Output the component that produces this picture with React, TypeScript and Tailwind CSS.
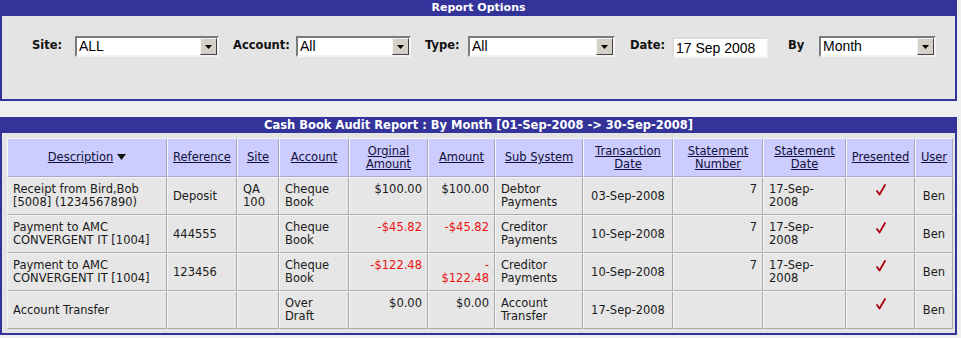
import React from "react";

const tdFont = { fontFamily: '"DejaVu Sans", Verdana, sans-serif' };

function Select({ value, width }: { value: string; width: string }) {
  return (
    <div
      className={`flex h-[21px] ${width} items-stretch border-2 border-t-[#7a7a7a] border-l-[#7a7a7a] border-b-[#f4f4f4] border-r-[#f4f4f4] bg-white`}
    >
      <div
        className="flex-1 pl-[2px] text-[14px] font-normal leading-[17px] text-black"
        style={{ fontFamily: '"Liberation Sans", Arial, sans-serif' }}
      >
        {value}
      </div>
      <div className="flex w-[17px] items-center justify-center border border-t-[#f4f4f4] border-l-[#f4f4f4] border-b-[#404040] border-r-[#404040] bg-[#d4d0c8]">
        <svg width="7" height="4" viewBox="0 0 7 4">
          <path d="M0 0 H7 L3.5 4 Z" fill="#000" />
        </svg>
      </div>
    </div>
  );
}

function Check() {
  return (
    <svg width="12" height="14" viewBox="0 0 12 14" className="mx-auto">
      <path d="M2 8 L4.5 11.5 L10 2" fill="none" stroke="#b00010" strokeWidth="1.8" strokeLinecap="round" strokeLinejoin="round" />
    </svg>
  );
}

type Row = {
  desc: string[];
  ref: string;
  site: string[];
  account: string[];
  orig: string;
  amount: string[];
  red: boolean;
  sub: string[];
  tdate: string;
  snum: string;
  sdate: string[];
};

const rows: Row[] = [
  {
    desc: ["Receipt from Bird,Bob", "[5008] (1234567890)"],
    ref: "Deposit",
    site: ["QA", "100"],
    account: ["Cheque", "Book"],
    orig: "$100.00",
    amount: ["$100.00", "\u00a0"],
    red: false,
    sub: ["Debtor", "Payments"],
    tdate: "03-Sep-2008",
    snum: "7",
    sdate: ["17-Sep-", "2008"],
  },
  {
    desc: ["Payment to AMC", "CONVERGENT IT [1004]"],
    ref: "444555",
    site: [],
    account: ["Cheque", "Book"],
    orig: "-$45.82",
    amount: ["-$45.82", "\u00a0"],
    red: true,
    sub: ["Creditor", "Payments"],
    tdate: "10-Sep-2008",
    snum: "7",
    sdate: ["17-Sep-", "2008"],
  },
  {
    desc: ["Payment to AMC", "CONVERGENT IT [1004]"],
    ref: "123456",
    site: [],
    account: ["Cheque", "Book"],
    orig: "-$122.48",
    amount: ["-", "$122.48"],
    red: true,
    sub: ["Creditor", "Payments"],
    tdate: "10-Sep-2008",
    snum: "7",
    sdate: ["17-Sep-", "2008"],
  },
  {
    desc: ["Account Transfer"],
    ref: "",
    site: [],
    account: ["Over", "Draft"],
    orig: "$0.00",
    amount: ["$0.00", "\u00a0"],
    red: false,
    sub: ["Account", "Transfer"],
    tdate: "17-Sep-2008",
    snum: "",
    sdate: [],
  },
];

function Lines({ lines }: { lines: string[] }) {
  return (
    <>
      {lines.map((l, i) => (
        <div key={i} className="whitespace-nowrap">{l}</div>
      ))}
    </>
  );
}

const th =
  "border-l border-t border-l-[#f6f6ff] border-t-[#f6f6ff] border-r border-b border-r-[#a8a8c0] border-b-[#a8a8c0] bg-[#ccccff] px-[3px] text-center align-middle font-normal text-[#10103a]";
const td =
  "border-l border-t border-l-[#f4f4f4] border-t-[#f4f4f4] border-r border-b border-r-[#a9a9a9] border-b-[#a9a9a9] bg-[#e6e6e6] px-[5px] align-middle text-[#1a1a1a]";

export default function App() {
  return (
    <div className="min-h-[338px] w-[961px] bg-[#efefef]" style={tdFont}>
      {/* Report Options */}
      <div className="w-[957px]">
        <div className="h-[16px] bg-[#333399] text-center text-[11px] font-bold leading-[16px] text-white">
          Report Options
        </div>
        <div className="flex h-[85px] items-start border-b-2 border-l-2 border-r-2 border-[#333399] bg-[#e4e4e4] pl-[30px] pt-[20px] text-[11.5px] font-bold text-[#111]">
          <span className="mt-[1px] w-[43px]">Site:</span>
          <Select value="ALL" width="w-[144px]" />
          <span className="ml-[14px] mt-[1px] w-[63px]">Account:</span>
          <Select value="All" width="w-[115px]" />
          <span className="ml-[14px] mt-[1px] w-[43px]">Type:</span>
          <Select value="All" width="w-[147px]" />
          <span className="ml-[15px] mt-[1px] w-[42px]">Date:</span>
          <div
            className="mt-[1px] h-[21px] w-[96px] border-2 border-t-[#dcdcdc] border-l-[#dcdcdc] border-b-[#f4f4f4] border-r-[#f4f4f4] bg-white pl-[2px] text-[14px] font-normal leading-[18px] text-black"
            style={{ fontFamily: '"Liberation Sans", Arial, sans-serif' }}
          >
            17 Sep 2008
          </div>
          <span className="ml-[20px] mt-[1px] w-[31px]">By</span>
          <Select value="Month" width="w-[117px]" />
        </div>
      </div>

      <div className="h-[16px]" />

      {/* Cash Book Audit */}
      <div className="w-[957px]">
        <div className="h-[16px] bg-[#333399] text-center text-[11.5px] font-bold leading-[16px] text-white">
          Cash Book Audit Report : By Month [01-Sep-2008 -&gt; 30-Sep-2008]
        </div>
        <div className="border-b-2 border-l-2 border-r-2 border-[#333399] bg-[#e4e4e4] pb-[4px] pl-[5px] pt-[5px]">
          <table className="w-[946px] table-fixed border-separate border-spacing-0 text-[11.5px] leading-[13px]">
            <colgroup>
              <col className="w-[160px]" />
              <col className="w-[70px]" />
              <col className="w-[42px]" />
              <col className="w-[70px]" />
              <col className="w-[79px]" />
              <col className="w-[67px]" />
              <col className="w-[88px]" />
              <col className="w-[90px]" />
              <col className="w-[90px]" />
              <col className="w-[83px]" />
              <col className="w-[69px]" />
              <col className="w-[38px]" />
            </colgroup>
            <thead>
              <tr className="h-[39px]">
                <th className={th}>
                  <span className="underline">Description</span>
                  <svg width="9" height="6" viewBox="0 0 9 6" className="ml-[4px] inline-block align-[1px]">
                    <path d="M0 0 H9 L4.5 6 Z" fill="#111" />
                  </svg>
                </th>
                <th className={th}><span className="underline">Reference</span></th>
                <th className={th}><span className="underline">Site</span></th>
                <th className={th}><span className="underline">Account</span></th>
                <th className={th}><span className="underline">Orginal<br />Amount</span></th>
                <th className={th}><span className="underline">Amount</span></th>
                <th className={th}><span className="underline">Sub System</span></th>
                <th className={th}><span className="underline">Transaction<br />Date</span></th>
                <th className={th}><span className="underline">Statement<br />Number</span></th>
                <th className={th}><span className="underline">Statement<br />Date</span></th>
                <th className={th}><span className="underline">Presented</span></th>
                <th className={th}><span className="underline">User</span></th>
              </tr>
            </thead>
            <tbody>
              {rows.map((r, i) => (
                <tr key={i} className="h-[38px]">
                  <td className={td}><Lines lines={r.desc} /></td>
                  <td className={td}>{r.ref}</td>
                  <td className={td}><Lines lines={r.site} /></td>
                  <td className={td}><Lines lines={r.account} /></td>
                  <td className={`${td} text-right ${r.red ? "text-[#ee1111]" : ""}`}>
                    <Lines lines={[r.orig, "\u00a0"]} />
                  </td>
                  <td className={`${td} text-right ${r.red ? "text-[#ee1111]" : ""}`}>
                    <Lines lines={r.amount} />
                  </td>
                  <td className={td}><Lines lines={r.sub} /></td>
                  <td className={`${td} whitespace-nowrap text-center`}>{r.tdate}</td>
                  <td className={`${td} text-right`}>
                    <Lines lines={[r.snum || "\u00a0", "\u00a0"]} />
                  </td>
                  <td className={td}><Lines lines={r.sdate} /></td>
                  <td className={`${td} text-center`}>
                    <div className="flex flex-col items-center">
                      <Check />
                      <div className="h-[12px]" />
                    </div>
                  </td>
                  <td className={`${td} text-center`}>Ben</td>
                </tr>
              ))}
            </tbody>
          </table>
        </div>
      </div>
    </div>
  );
}
